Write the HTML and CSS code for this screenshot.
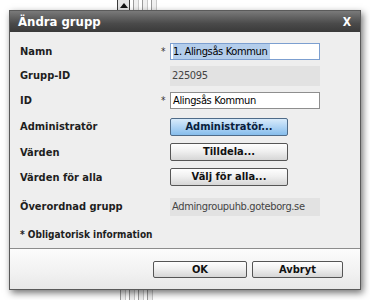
FILE: index.html
```html
<!DOCTYPE html>
<html lang="sv">
<head>
<meta charset="utf-8">
<title>Ändra grupp</title>
<link rel="stylesheet" href="styles.css">
</head>
<body>
<div class="page">
  <div class="backdrop backdrop-top">
    <span class="arrow-box"><span class="arrow"></span></span>
    <span class="rail"></span><span class="rail"></span><span class="rail"></span>
  </div>
  <div class="backdrop backdrop-bottom">
    <span class="rail"></span><span class="rail"></span><span class="rail"></span><span class="rail"></span>
  </div>
  <div class="dialog">
    <div class="titlebar">
      <span class="title">Ändra grupp</span>
      <span class="close">X</span>
    </div>
    <div class="content">
      <div class="form">
        <div class="label r1">Namn</div><div class="star r1">*</div>
        <div class="field r1"><div class="input focused"><span class="sel">1. Alingsås Kommun</span></div></div>

        <div class="label r2">Grupp-ID</div><div class="star r2"></div>
        <div class="field r2"><div class="readonly">225095</div></div>

        <div class="label r3">ID</div><div class="star r3">*</div>
        <div class="field r3"><div class="input">Alingsås Kommun</div></div>

        <div class="label r4">Administratör</div><div class="star r4"></div>
        <div class="field r4"><div class="btn btn-blue">Administratör...</div></div>

        <div class="label r5">Värden</div><div class="star r5"></div>
        <div class="field r5"><div class="btn">Tilldela...</div></div>

        <div class="label r6">Värden för alla</div><div class="star r6"></div>
        <div class="field r6"><div class="btn">Välj för alla...</div></div>

        <div class="label r7">Överordnad grupp</div><div class="star r7"></div>
        <div class="field r7"><div class="readonly">Admingroupuhb.goteborg.se</div></div>

        <div class="note r8">* Obligatorisk information</div>
      </div>
    </div>
    <div class="footer">
      <div class="btn footer-btn ok">OK</div>
      <div class="btn footer-btn cancel">Avbryt</div>
    </div>
  </div>
</div>
</body>
</html>
```
FILE: styles.css
```css
html, body {
  margin: 0;
  padding: 0;
  background: #ffffff;
}
body {
  width: 370px;
  height: 300px;
  overflow: hidden;
  font-family: "DejaVu Sans Condensed", "DejaVu Sans", sans-serif;
}
.page {
  position: relative;
  width: 370px;
  height: 300px;
  padding: 10px 0 0 9px;
  box-sizing: border-box;
}
.backdrop {
  position: absolute;
  left: 117px;
  display: flex;
  gap: 3px;
  height: 12px;
}
.backdrop-top { top: 0; }
.backdrop-bottom { top: 288px; left: 120px; }
.arrow-box {
  width: 11px;
  height: 10px;
  border: 1px solid #3a3a3a;
  border-top: none;
  background: #e4e4e4;
  display: flex;
  justify-content: center;
  align-items: center;
}
.arrow {
  width: 0;
  height: 0;
  border-left: 4px solid transparent;
  border-right: 4px solid transparent;
  border-bottom: 5px solid #111;
}
.rail {
  width: 4px;
  height: 12px;
  border-left: 1px solid #9a9a9a;
  border-right: 1px solid #c8c8c8;
  background: #f0f0f0;
}
.dialog {
  position: relative;
  width: 352px;
  height: 280px;
  box-sizing: border-box;
  border: 1px solid #5a5a5a;
  background: #eeeeee;
  box-shadow: 2px 3px 7px rgba(0, 0, 0, 0.55);
  display: flex;
  flex-direction: column;
}
.titlebar {
  height: 21px;
  flex: none;
  background: linear-gradient(#7a7a7a, #4a4a4a 60%, #3a3a3a);
  color: #fff;
  display: flex;
  align-items: center;
  justify-content: space-between;
  padding: 0 9px 0 8px;
  font-family: "DejaVu Sans Condensed", "DejaVu Sans", sans-serif;
  font-weight: bold;
}
.title {
  font-size: 13px;
}
.close {
  font-size: 12px;
  font-weight: bold;
}
.content {
  flex: 1;
  padding: 7px 0 0 10px;
}
.form {
  display: grid;
  grid-template-columns: 141px 9px 150px;
  grid-template-rows: 25px 23px 27px 25px 26px 24px 35px 20px;
  align-items: center;
}
.label, .note {
  font-size: 11px;
  font-weight: bold;
  color: #1e1e1e;
}
.note {
  grid-column: 1 / 4;
  font-size: 10px;
}
.star {
  font-size: 10px;
  color: #333;
  text-align: left;
}
.field {
  font-family: "DejaVu Sans Condensed", "DejaVu Sans", sans-serif;
  font-size: 11px;
  letter-spacing: -0.35px;
}
.input {
  height: 17px;
  box-sizing: border-box;
  border: 1px solid #8e8e8e;
  background: #fff;
  color: #000;
  padding: 0 2px;
  line-height: 15px;
  white-space: nowrap;
}
.input.focused {
  border-color: #7c9fd0;
}
.sel {
  background: #b3cdeb;
  display: inline-block;
  padding-right: 3px;
}
.readonly {
  height: 20px;
  line-height: 20px;
  background: #e2e2e2;
  color: #444;
  padding-left: 2px;
  white-space: nowrap;
}
.r7 .readonly { height: 18px; line-height: 18px; }
.btn {
  width: 118px;
  height: 18px;
  box-sizing: border-box;
  border: 1px solid #555;
  border-radius: 2px;
  background: linear-gradient(#fefefe, #f0f0f0 45%, #d6d6d6);
  font-family: "DejaVu Sans Condensed", "DejaVu Sans", sans-serif;
  font-size: 11px;
  font-weight: bold;
  letter-spacing: 0;
  color: #111;
  text-align: center;
  line-height: 16px;
}
.btn-blue {
  background: linear-gradient(#d8ebfb, #b3d6f5 45%, #86bdec);
  border-color: #4f6b88;
  color: #0a1e3c;
}
.footer {
  height: 40px;
  flex: none;
  border-top: 1px solid #8c8c8c;
  background: linear-gradient(#fcfcfc, #f1f1f1 60%, #e8e8e8);
  display: flex;
  align-items: center;
  justify-content: flex-end;
  gap: 5px;
  padding-right: 17px;
}
.footer-btn {
  height: 17px;
  line-height: 15px;
}
.ok { width: 94px; }
.cancel { width: 91px; }
```
